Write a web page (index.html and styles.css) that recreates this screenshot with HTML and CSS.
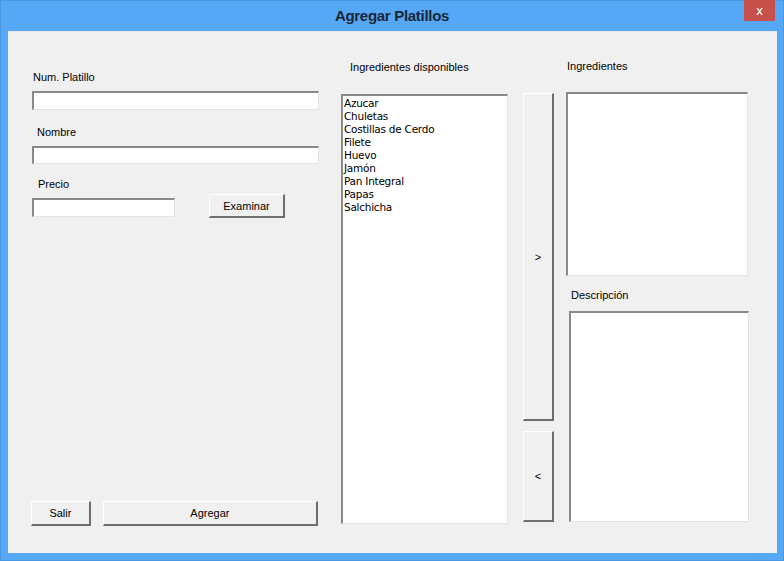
FILE: index.html
```html
<!DOCTYPE html>
<html lang="es">
<head>
<meta charset="utf-8">
<title>Agregar Platillos</title>
<link rel="stylesheet" href="styles.css">
</head>
<body>
<div class="window">
  <div class="titlebar">
    <span class="title">Agregar Platillos</span>
    <span class="close">x</span>
  </div>
  <div class="client">
    <div class="col-left">
      <div class="label l1">Num. Platillo</div>
      <div class="input i1"></div>
      <div class="label l2">Nombre</div>
      <div class="input i2"></div>
      <div class="label l3">Precio</div>
      <div class="row-precio">
        <div class="input i3"></div>
        <div class="btn btn-examinar">Examinar</div>
      </div>
      <div class="row-bottom">
        <div class="btn btn-salir">Salir</div>
        <div class="btn btn-agregar">Agregar</div>
      </div>
    </div>
    <div class="col-mid">
      <div class="label lm">Ingredientes disponibles</div>
      <div class="listbox lb-main">
        <div>Azucar</div>
        <div>Chuletas</div>
        <div>Costillas de Cerdo</div>
        <div>Filete</div>
        <div>Huevo</div>
        <div>Jamón</div>
        <div>Pan Integral</div>
        <div>Papas</div>
        <div>Salchicha</div>
      </div>
    </div>
    <div class="col-btns">
      <div class="btn btn-add">&gt;</div>
      <div class="btn btn-remove">&lt;</div>
    </div>
    <div class="col-right">
      <div class="label lr1">Ingredientes</div>
      <div class="listbox lb-sel"></div>
      <div class="label lr2">Descripción</div>
      <div class="listbox lb-desc"></div>
    </div>
  </div>
</div>
</body>
</html>
```
FILE: styles.css
```css
html, body {
  margin: 0;
  padding: 0;
}
body {
  width: 784px;
  height: 561px;
  overflow: hidden;
  background: #5aabf7;
  font-family: "Liberation Sans", Arial, sans-serif;
}
.window {
  width: 784px;
  height: 561px;
  box-sizing: border-box;
  background: #55a8f6;
  border: 1px solid #4a98e4;
  display: flex;
  flex-direction: column;
}
.titlebar {
  height: 30px;
  position: relative;
  display: flex;
  justify-content: center;
  align-items: center;
}
.title {
  font-family: "Liberation Sans", Arial, sans-serif;
  font-weight: bold;
  font-size: 15px;
  color: #1a2636;
  margin-top: -1px;
  letter-spacing: -0.3px;
}
.close {
  position: absolute;
  right: 8px;
  top: -1px;
  width: 31px;
  height: 21px;
  background: #c8504a;
  color: #fff;
  font-size: 12px;
  font-family: "DejaVu Sans", sans-serif;
  display: flex;
  justify-content: center;
  align-items: center;
  line-height: 1;
}
.client {
  margin: 0 6px 0 7px;
  height: 522px;
  background: #f0f0f0;
  border-top: 1px solid #e4e4e4;
  box-sizing: border-box;
  display: grid;
  grid-template-columns: 287px 190px 45px 195px;
  padding-left: 23px;
  font-size: 11px;
  color: #000;
}
.label {
  font-family: "Liberation Sans", Arial, sans-serif;
  font-size: 11px;
  line-height: 13px;
  height: 13px;
  white-space: nowrap;
}
.input,
.listbox {
  background: #fff;
  box-sizing: border-box;
  border-top: 2px solid #8a8a8a;
  border-left: 2px solid #8a8a8a;
  border-right: 1px solid #e3e3e3;
  border-bottom: 1px solid #e3e3e3;
}
.btn {
  box-sizing: border-box;
  background: #f0f0f0;
  border-top: 1px solid #ffffff;
  border-left: 1px solid #ffffff;
  border-right: 2px solid #6e6e6e;
  border-bottom: 2px solid #6e6e6e;
  display: flex;
  justify-content: center;
  align-items: center;
  font-size: 11px;
  font-family: "Liberation Sans", Arial, sans-serif;
}

/* left column */
.col-left {
  display: flex;
  flex-direction: column;
}
.l1 { margin-top: 39px; margin-left: 2px; }
.i1 { margin-top: 7px; width: 287px; height: 19px; margin-left: 1px; }
.l2 { margin-top: 16px; margin-left: 6px; }
.i2 { margin-top: 7px; width: 287px; height: 18px; margin-left: 1px; }
.l3 { margin-top: 14px; margin-left: 7px; }
.row-precio {
  display: flex;
  align-items: flex-start;
  margin-top: 3px;
}
.i3 { margin-top: 4px; width: 143px; height: 19px; margin-left: 1px; }
.btn-examinar { margin-left: 34px; width: 76px; height: 24px; }
.row-bottom {
  margin-top: auto;
  margin-bottom: 27px;
  display: flex;
  gap: 12px;
}
.btn-salir { width: 60px; height: 25px; }
.btn-agregar { width: 216px; height: 25px; }

/* middle column */
.col-mid {
  display: flex;
  flex-direction: column;
  padding-left: 23px;
}
.lm { margin-top: 29px; margin-left: 9px; }
.lb-main {
  margin-top: 20px;
  width: 167px;
  height: 430px;
  padding: 1px 0 0 1px;
  font-family: "DejaVu Sans", sans-serif;
  font-size: 10.5px;
  line-height: 13px;
  letter-spacing: -0.25px;
}

/* buttons column */
.col-btns {
  display: flex;
  flex-direction: column;
  padding-left: 15px;
}
.btn-add { margin-top: 61px; width: 31px; height: 328px; }
.btn-remove { margin-top: 10px; width: 31px; height: 91px; }

/* right column */
.col-right {
  display: flex;
  flex-direction: column;
  padding-left: 13px;
}
.lr1 { margin-top: 28px; margin-left: 1px; }
.lb-sel { margin-top: 19px; width: 182px; height: 184px; }
.lr2 { margin-top: 13px; margin-left: 5px; }
.lb-desc { margin-top: 9px; width: 180px; height: 211px; margin-left: 3px; }
```
